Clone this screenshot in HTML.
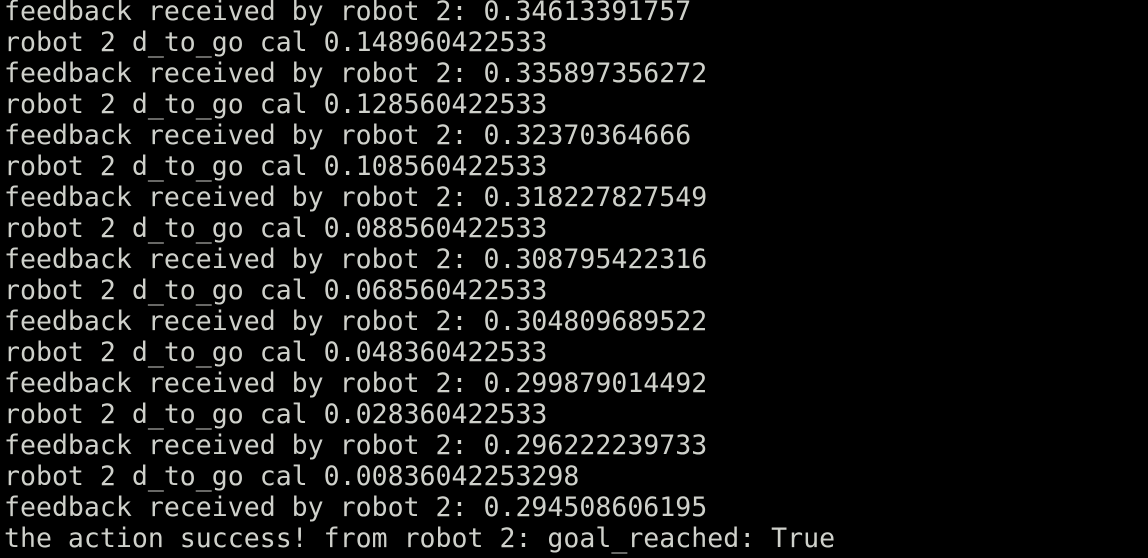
<!DOCTYPE html>
<html><head><style>
html,body{margin:0;padding:0;background:#000;width:1148px;height:558px;overflow:hidden}
pre{margin:0;position:absolute;left:4px;top:-4px;font-family:"DejaVu Sans Mono","Liberation Mono",monospace;font-size:26.55px;line-height:31px;color:#cfd1cb}
</style></head><body><pre>feedback received by robot 2: 0.34613391757
robot 2 d_to_go cal 0.148960422533
feedback received by robot 2: 0.335897356272
robot 2 d_to_go cal 0.128560422533
feedback received by robot 2: 0.32370364666
robot 2 d_to_go cal 0.108560422533
feedback received by robot 2: 0.318227827549
robot 2 d_to_go cal 0.088560422533
feedback received by robot 2: 0.308795422316
robot 2 d_to_go cal 0.068560422533
feedback received by robot 2: 0.304809689522
robot 2 d_to_go cal 0.048360422533
feedback received by robot 2: 0.299879014492
robot 2 d_to_go cal 0.028360422533
feedback received by robot 2: 0.296222239733
robot 2 d_to_go cal 0.00836042253298
feedback received by robot 2: 0.294508606195
the action success! from robot 2: goal_reached: True</pre></body></html>
